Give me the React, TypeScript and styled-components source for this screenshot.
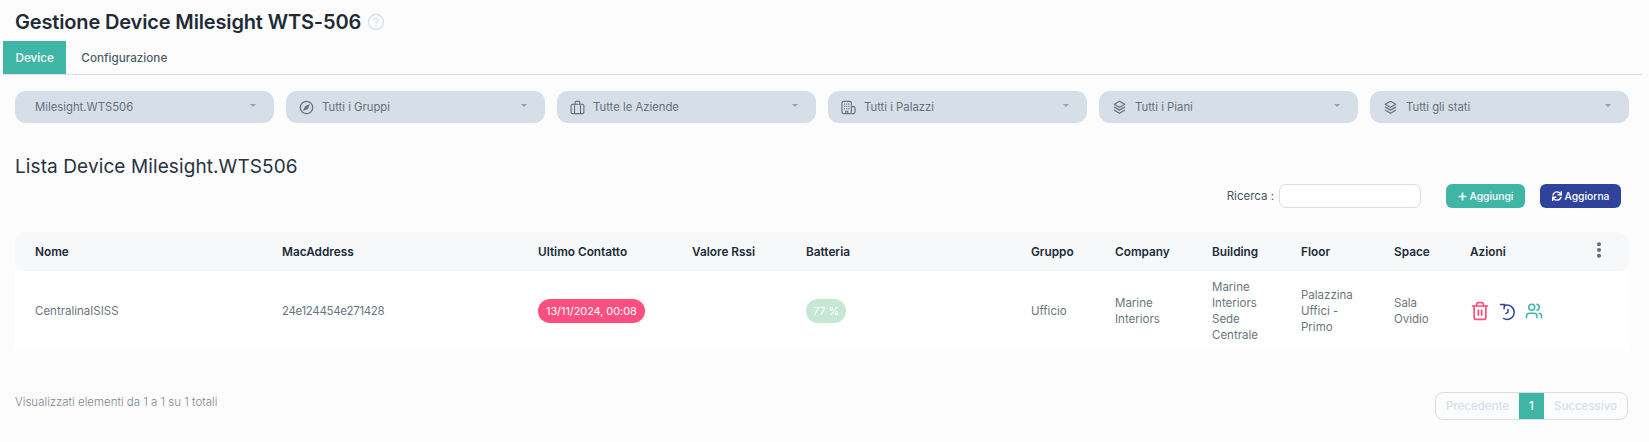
import { ReactNode } from 'react';
import styled, { createGlobalStyle } from 'styled-components';
import { CircleHelp, EllipsisVertical, Trash2, Users } from 'lucide-react';
import { FaPlus, FaSync } from 'react-icons/fa';

const GlobalStyle = createGlobalStyle`
  html, body {
    margin: 0;
    padding: 0;
    background: #fcfcfd;
    font-family: Inter, "Liberation Sans", sans-serif;
    color: #6c757d;
  }
`;

const CompassIcon = () => (
  <svg width="15" height="15" viewBox="0 0 16 16" fill="none" stroke="currentColor" strokeWidth="1.4">
    <circle cx="8" cy="8" r="6.6" />
    <path d="M11 5 9.2 9.2 5 11l1.8-4.2z" fill="currentColor" strokeWidth="0.8" strokeLinejoin="round" />
  </svg>
);

const BriefcaseIcon = () => (
  <svg width="15" height="15" viewBox="0 0 16 16" fill="none" stroke="currentColor" strokeWidth="1.2">
    <rect x="1.2" y="4.5" width="13.6" height="10" rx="1.4" />
    <path d="M5.5 4.5V2.4c0-.5.4-.9.9-.9h3.2c.5 0 .9.4.9.9v2.1M4.8 4.5v10M11.2 4.5v10" />
  </svg>
);

const BuildingIcon = () => (
  <svg width="15" height="15" viewBox="0 0 16 16" fill="none" stroke="currentColor" strokeWidth="1.2">
    <rect x="1" y="1.5" width="10" height="13" rx="1.6" />
    <path d="M11 7h2.4c.9 0 1.6.7 1.6 1.6v4.3c0 .9-.7 1.6-1.6 1.6H11M5 14.5v-2.5h2.2v2.5" />
    <path d="M3.4 4.4h1M5.6 4.4h1M7.8 4.4h1M3.4 6.8h1M5.6 6.8h1M7.8 6.8h1M3.4 9.2h1M5.6 9.2h1M7.8 9.2h1" />
  </svg>
);

const LayersIcon = () => (
  <svg width="15" height="15" viewBox="0 0 16 16" fill="none" stroke="currentColor" strokeWidth="1.3" strokeLinejoin="round" strokeLinecap="round">
    <path d="M8 1.4 13.6 4.6 8 7.8 2.4 4.6z" />
    <path d="M2.6 7.6 8 10.8l5.4-3.2" />
    <path d="M2.6 10.9 8 14.2l5.4-3.3" />
  </svg>
);

const RestoreIcon = () => (
  <svg width="19" height="19" viewBox="0 0 24 24" fill="none" stroke="#2f439c" strokeWidth="1.9" strokeLinecap="round" strokeLinejoin="round">
    <path d="M8 4.6a9 9 0 1 1-1 16.2" />
    <path d="M3.2 3.2h5.2L7.6 8.6" />
    <path d="M12.6 9.4v3.6l-2.4 1.5" />
  </svg>
);

const filters: { label: string; icon?: ReactNode }[] = [
  { label: 'Milesight.WTS506' },
  { label: 'Tutti i Gruppi', icon: <CompassIcon /> },
  { label: 'Tutte le Aziende', icon: <BriefcaseIcon /> },
  { label: 'Tutti i Palazzi', icon: <BuildingIcon /> },
  { label: 'Tutti i Piani', icon: <LayersIcon /> },
  { label: 'Tutti gli stati', icon: <LayersIcon /> },
];

const columns = [
  { title: 'Nome', width: 247 },
  { title: 'MacAddress', width: 256 },
  { title: 'Ultimo Contatto', width: 154 },
  { title: 'Valore Rssi', width: 114 },
  { title: 'Batteria', width: 225 },
  { title: 'Gruppo', width: 84 },
  { title: 'Company', width: 97 },
  { title: 'Building', width: 89 },
  { title: 'Floor', width: 93 },
  { title: 'Space', width: 76 },
  { title: 'Azioni', width: 179 },
];

const App = () => (
  <Page>
    <GlobalStyle />
    <TitleRow>
      <Title>Gestione Device Milesight WTS-506</Title>
      <CircleHelp size={18} color="#d6dee8" strokeWidth={1.7} />
    </TitleRow>
    <Tabs>
      <Tab active>Device</Tab>
      <Tab>Configurazione</Tab>
    </Tabs>
    <Filters>
      {filters.map((filter) => (
        <Filter key={filter.label} plain={!filter.icon}>
          {filter.icon}
          <FilterLabel>{filter.label}</FilterLabel>
          <Caret />
        </Filter>
      ))}
    </Filters>
    <SectionTitle>Lista Device Milesight.WTS506</SectionTitle>
    <Toolbar>
      <SearchLabel>Ricerca :</SearchLabel>
      <SearchInput />
      <ActionButton color="#3fb5a6" width={79}>
        <FaPlus size={9} />
        Aggiungi
      </ActionButton>
      <ActionButton color="#2f439c" width={81}>
        <FaSync size={10} />
        Aggiorna
      </ActionButton>
    </Toolbar>
    <Table>
      <colgroup>
        {columns.map((column) => (
          <col key={column.title} width={column.width} />
        ))}
      </colgroup>
      <thead>
        <tr>
          {columns.map((column) => (
            <HeadCell key={column.title}>
              {column.title === 'Azioni' ? (
                <HeadActions>
                  {column.title}
                  <Kebab size={20} color="#5c6670" strokeWidth={2.8} />
                </HeadActions>
              ) : (
                column.title
              )}
            </HeadCell>
          ))}
        </tr>
      </thead>
      <tbody>
        <tr>
          <Cell>CentralinaISISS</Cell>
          <MacCell>24e124454e271428</MacCell>
          <Cell>
            <Badge color="#fc4f7f">13/11/2024, 00:08</Badge>
          </Cell>
          <Cell />
          <Cell>
            <Badge color="#c5e7d3" compact>
              77 %
            </Badge>
          </Cell>
          <Cell>Ufficio</Cell>
          <Cell>Marine Interiors</Cell>
          <Cell>Marine Interiors Sede Centrale</Cell>
          <Cell>Palazzina Uffici - Primo</Cell>
          <Cell>Sala Ovidio</Cell>
          <Cell>
            <RowActions>
              <Trash2 size={20} color="#fc4f7f" strokeWidth={2} />
              <RestoreIcon />
              <Users size={18} color="#3fb5a6" strokeWidth={2} />
            </RowActions>
          </Cell>
        </tr>
      </tbody>
    </Table>
    <Footer>
      <FooterInfo>Visualizzati elementi da 1 a 1 su 1 totali</FooterInfo>
      <Pagination>
        <PageLink>Precedente</PageLink>
        <PageNumber>1</PageNumber>
        <PageLink>Successivo</PageLink>
      </Pagination>
    </Footer>
  </Page>
);

export default App;

const Page = styled.div`
  width: 1649px;
  height: 442px;
  overflow: hidden;
  box-sizing: border-box;
  padding-top: 9px;
`;

const TitleRow = styled.div`
  display: flex;
  align-items: center;
  gap: 6px;
  height: 26px;
  padding-left: 15px;
`;

const Title = styled.h1`
  margin: 0;
  font-size: 20px;
  font-weight: 600;
  letter-spacing: -0.15px;
  color: #212b36;
`;

const Tabs = styled.div`
  display: flex;
  margin: 6px 7px 0 3px;
  height: 33px;
  border-bottom: 1px solid #dcdfe3;
`;

const Tab = styled.div<{ active?: boolean }>`
  display: flex;
  align-items: center;
  padding: 0 ${({ active }) => (active ? '12.5px' : '15px')};
  font-size: 11.7px;
  font-weight: 500;
  background: ${({ active }) => (active ? '#3fb5a6' : 'transparent')};
  color: ${({ active }) => (active ? '#ffffff' : '#4f5b67')};
`;

const Filters = styled.div`
  display: grid;
  grid-template-columns: repeat(6, 1fr);
  gap: 12px;
  margin: 16px 20px 0 15px;
`;

const Filter = styled.div<{ plain?: boolean }>`
  display: flex;
  align-items: center;
  gap: 8px;
  height: 32px;
  padding: 0 18px 0 ${({ plain }) => (plain ? '20px' : '13px')};
  border-radius: 11px;
  background: #d6dee8;
  color: #66717c;
`;

const FilterLabel = styled.span`
  flex: 1;
  font-size: 11.3px;
`;

const Caret = styled.span`
  width: 0;
  height: 0;
  margin-top: -3px;
  border-left: 3.5px solid transparent;
  border-right: 3.5px solid transparent;
  border-top: 3.5px solid #96a0aa;
`;

const SectionTitle = styled.h2`
  margin: 31px 0 0 15px;
  font-size: 19px;
  line-height: 26px;
  font-weight: 400;
  letter-spacing: 0.1px;
  color: #29333d;
`;

const Toolbar = styled.div`
  display: flex;
  justify-content: flex-end;
  align-items: center;
  gap: 15px;
  height: 24px;
  margin: 4px 28px 0 0;
`;

const SearchLabel = styled.span`
  font-size: 11.5px;
  color: #4a5561;
  margin-right: -10px;
`;

const SearchInput = styled.input`
  box-sizing: border-box;
  width: 142px;
  height: 24px;
  margin-right: 10px;
  border: 1px solid #d6dee8;
  border-radius: 7px;
  background: #ffffff;
`;

const ActionButton = styled.button<{ color: string; width: number }>`
  display: flex;
  align-items: center;
  justify-content: center;
  gap: 3px;
  width: ${({ width }) => width}px;
  height: 24px;
  padding: 0;
  border: 0;
  border-radius: 6px;
  font-family: inherit;
  font-size: 10.3px;
  font-weight: 500;
  color: #ffffff;
  background: ${({ color }) => color};
`;

const Table = styled.table`
  width: 1614px;
  margin: 24px 0 0 15px;
  table-layout: fixed;
  border-collapse: separate;
  border-spacing: 0;
`;

const HeadCell = styled.th`
  height: 39px;
  padding: 0 20px;
  text-align: left;
  font-size: 11.8px;
  font-weight: 600;
  color: #212b36;
  background: #f6f8fa;
  &:first-child {
    border-radius: 12px 0 0 12px;
  }
  &:last-child {
    border-radius: 0 12px 12px 0;
    padding-right: 20px;
  }
`;

const HeadActions = styled.div`
  display: flex;
  justify-content: space-between;
  align-items: center;
`;

const Kebab = styled(EllipsisVertical)`
  margin-top: -3px;
`;

const Cell = styled.td`
  height: 80px;
  padding: 0 20px;
  font-size: 11.5px;
  line-height: 16px;
  color: #6c757d;
  background: #ffffff;
`;

const MacCell = styled(Cell)`
  letter-spacing: -0.35px;
`;

const Badge = styled.span<{ color: string; compact?: boolean }>`
  display: inline-flex;
  align-items: center;
  height: 24px;
  padding: 0 ${({ compact }) => (compact ? '7px' : '8px')};
  border-radius: 12px;
  font-size: 11px;
  letter-spacing: -0.08px;
  white-space: nowrap;
  color: #ffffff;
  background: ${({ color }) => color};
`;

const RowActions = styled.div`
  display: flex;
  align-items: center;
  gap: 8px;
`;

const Footer = styled.div`
  display: flex;
  justify-content: space-between;
  align-items: center;
  height: 28px;
  margin: 41px 21px 0 15px;
`;

const FooterInfo = styled.span`
  padding-bottom: 8px;
  font-size: 11.5px;
  font-weight: 300;
  color: #7d8791;
`;

const Pagination = styled.div`
  display: flex;
  height: 28px;
  box-sizing: border-box;
  border: 1px solid #d6dee8;
  border-radius: 8px;
  overflow: hidden;
`;

const PageLink = styled.span`
  display: flex;
  align-items: center;
  padding: 0 10px;
  font-size: 11.5px;
  font-weight: 500;
  color: #d6dee8;
`;

const PageNumber = styled.span`
  display: flex;
  align-items: center;
  justify-content: center;
  width: 25px;
  font-size: 11.5px;
  font-weight: 500;
  color: #ffffff;
  background: #3fb5a6;
`;
